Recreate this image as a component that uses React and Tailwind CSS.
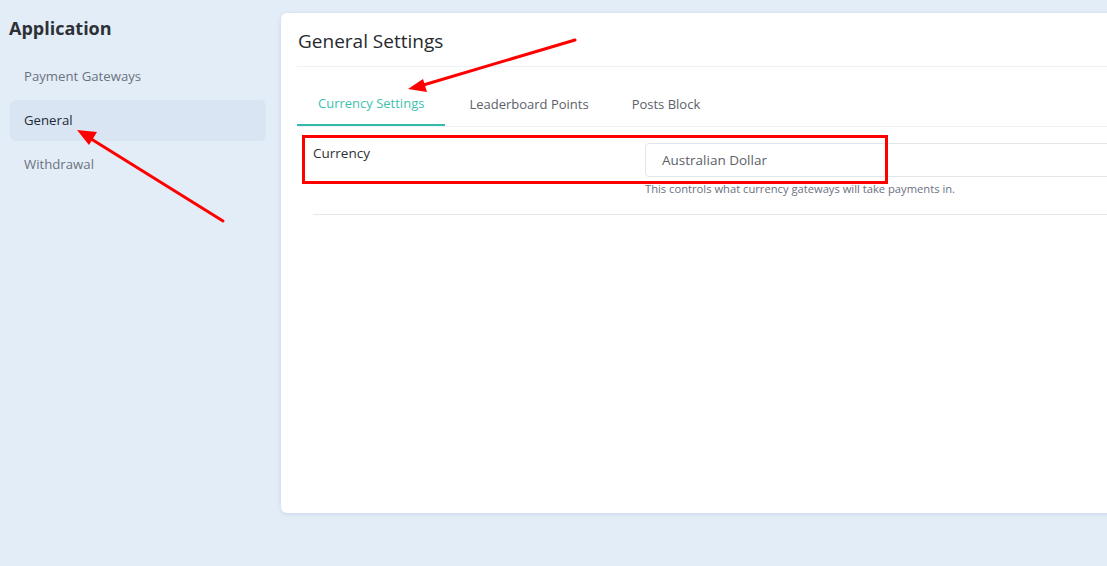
import React from "react";

export default function App() {
  return (
    <div
      className="relative w-[1107px] h-[566px] overflow-hidden bg-[#e3edf7] flex"
      style={{ fontFamily: '"Open Sans", "Noto Sans", sans-serif' }}
    >
      <aside className="w-[281px] shrink-0 pl-[10px] pr-[15px] pt-[15px]">
        <h2 className="-ml-[1px] text-[18px] leading-[26px] font-bold text-[#2d3136]">Application</h2>
        <nav className="mt-[15px] flex flex-col gap-[3px]">
          <div className="h-[41px] flex items-center px-[14px] rounded-md text-[13.2px] text-[#6b7280]">Payment Gateways</div>
          <div className="h-[41px] flex items-center px-[14px] rounded-md text-[13.2px] text-[#1f2937] bg-[#d9e5f2]">General</div>
          <div className="h-[41px] flex items-center px-[14px] rounded-md text-[13.2px] text-[#6b7280]">Withdrawal</div>
        </nav>
      </aside>

      <main className="pt-[13px]">
        <div className="w-[900px] h-[500px] bg-white rounded-md shadow-[0_1px_4px_rgba(140,170,210,0.35)] px-[16px]">
          <div className="h-[54px] flex items-center border-b border-[#eef2f6]">
            <h1 className="pl-[1px] pt-[4px] text-[19px] text-[#26292d]">General Settings</h1>
          </div>
          <div className="mt-[16px] flex border-b border-[#eef3f7] text-[13px]">
            <div className="h-[43px] flex items-center px-[21px] text-[#3fbfae] border-b-2 border-[#36b9a8] -mb-[1px]">Currency Settings</div>
            <div className="h-[43px] flex items-center pl-[24px] pr-[21px] text-[#5b6168]">Leaderboard Points</div>
            <div className="h-[43px] flex items-center pl-[22px] pr-[20px] text-[#5b6168]">Posts Block</div>
          </div>
          <div className="ml-[16px] border-b border-[#e5e7eb] pt-[16px] pb-[16px] flex">
            <div className="w-[332px] shrink-0 text-[13.5px] text-[#2d3136] leading-[20px]">Currency</div>
            <div className="flex-1">
              <div className="h-[34px] border border-[#e2e5e9] rounded-[4px] flex items-center px-[16px] text-[13.5px] text-[#5b6168]">Australian Dollar</div>
              <p className="mt-[4px] text-[11.2px] text-[#6b7280]">This controls what currency gateways will take payments in.</p>
            </div>
          </div>
        </div>
      </main>

      {/* annotations */}
      <div className="absolute left-[302px] top-[135px] w-[586px] h-[49px] border-[3px] border-[#ff0000]" />
      <svg className="absolute left-0 top-0 pointer-events-none" width="1107" height="566">
        <line x1="223" y1="221" x2="88" y2="137" stroke="#ff0000" strokeWidth="3" strokeLinecap="round" />
        <polygon points="77,130 97,132 89,145" fill="#ff0000" />
        <line x1="575" y1="40" x2="420" y2="86" stroke="#ff0000" strokeWidth="3" strokeLinecap="round" />
        <polygon points="408,89 423,79 427,92" fill="#ff0000" />
      </svg>
    </div>
  );
}
